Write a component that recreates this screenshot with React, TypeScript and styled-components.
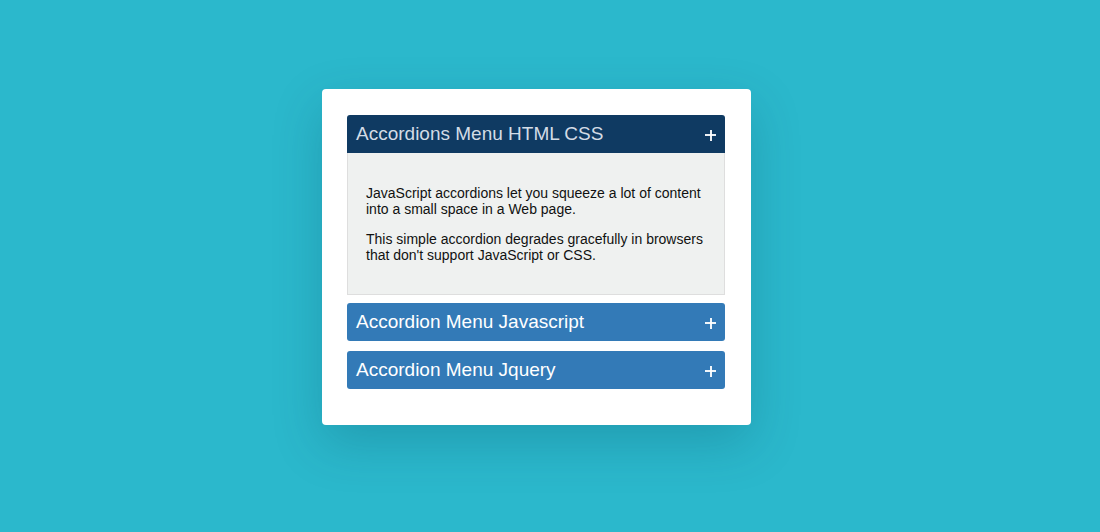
import React, { useState } from "react";
import styled, { createGlobalStyle } from "styled-components";

const GlobalStyle = createGlobalStyle`
  html, body {
    margin: 0;
    padding: 0;
    background-color: #2bb8cc;
    font-family: "Liberation Sans", Arial, sans-serif;
  }
`;

const Page = styled.div`
  min-height: 532px;
  box-sizing: border-box;
  padding: 89px 0 0 322px;
`;

const Card = styled.div`
  width: 429px;
  box-sizing: border-box;
  padding: 26px 26px 26px 25px;
  background-color: #ffffff;
  border-radius: 4px;
  box-shadow: 0 18px 50px rgba(0, 60, 80, 0.22);
`;

const Item = styled.div`
  margin-bottom: 10px;

  &:first-child {
    margin-bottom: 8px;
  }
`;

const Header = styled.div<{ $open: boolean }>`
  display: flex;
  justify-content: space-between;
  align-items: center;
  height: 38px;
  padding: 0 9px 0 9px;
  background-color: ${(p) => (p.$open ? "#0f3a62" : "#337ab7")};
  color: ${(p) => (p.$open ? "#d3dce6" : "#ffffff")};
  border-radius: ${(p) => (p.$open ? "3px 3px 0 0" : "3px")};
  font-size: 19px;
  cursor: pointer;
  user-select: none;
`;

const Plus = styled.span`
  position: relative;
  width: 11px;
  height: 11px;
  margin-top: 2px;

  &::before,
  &::after {
    content: "";
    position: absolute;
    background-color: #ffffff;
    opacity: 0.92;
  }
  &::before {
    left: 0;
    right: 0;
    top: 4.5px;
    height: 2px;
  }
  &::after {
    top: 0;
    bottom: 0;
    left: 4.5px;
    width: 2px;
  }
`;

const Panel = styled.div`
  box-sizing: border-box;
  height: 142px;
  padding: 18px 18px 16px;
  background-color: #eff1f0;
  border: 1px solid #dedede;
  border-top: none;
  color: #111111;
  font-size: 14px;
  line-height: 16px;

  p {
    margin: 14px 0;
  }
`;

const items = [
  {
    title: "Accordions Menu HTML CSS",
    body: [
      "JavaScript accordions let you squeeze a lot of content into a small space in a Web page.",
      "This simple accordion degrades gracefully in browsers that don't support JavaScript or CSS.",
    ],
  },
  { title: "Accordion Menu Javascript", body: [] },
  { title: "Accordion Menu Jquery", body: [] },
];

const App: React.FC = () => {
  const [open, setOpen] = useState(0);

  return (
    <Page>
      <GlobalStyle />
      <Card>
        {items.map((item, i) => (
          <Item key={item.title}>
            <Header $open={open === i} onClick={() => setOpen(open === i ? -1 : i)}>
              <span>{item.title}</span>
              <Plus />
            </Header>
            {open === i && (
              <Panel>
                {item.body.map((text) => (
                  <p key={text}>{text}</p>
                ))}
              </Panel>
            )}
          </Item>
        ))}
      </Card>
    </Page>
  );
};

export default App;
